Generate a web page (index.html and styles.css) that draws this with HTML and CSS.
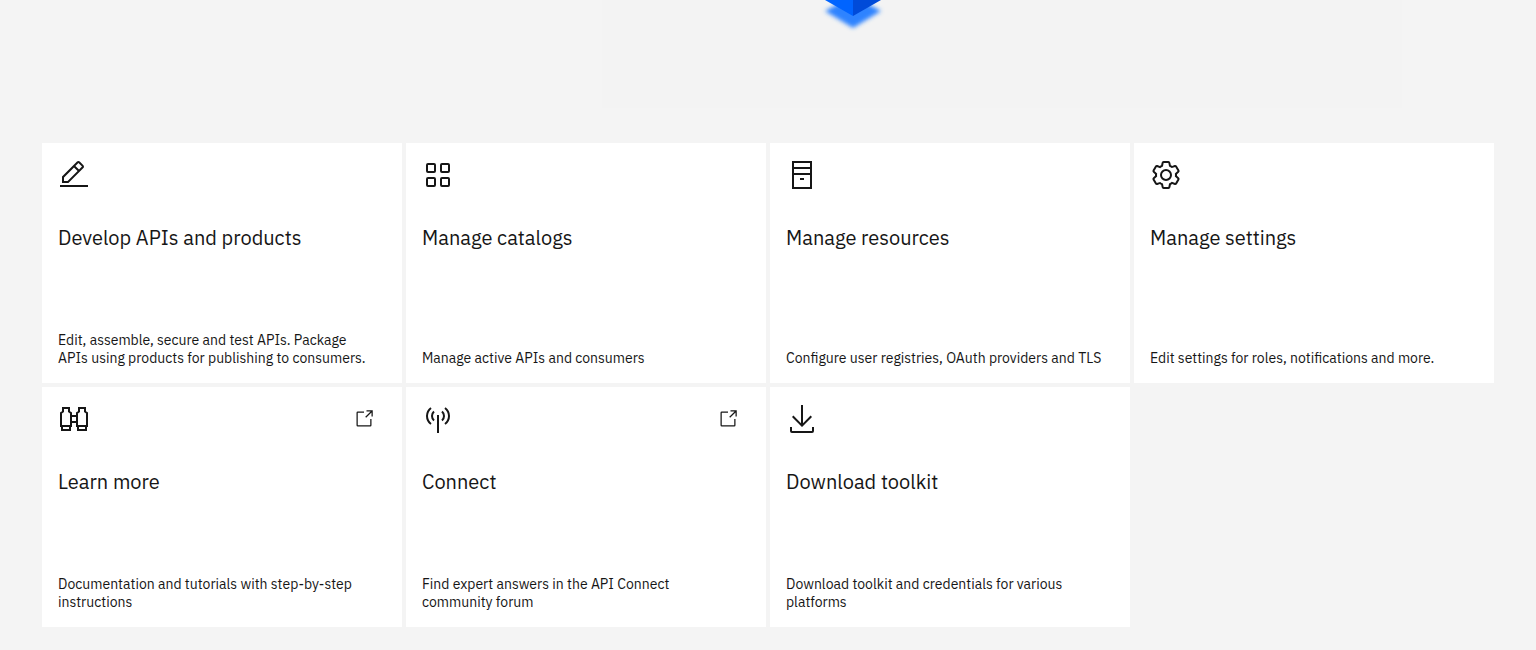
FILE: index.html
```html
<!DOCTYPE html>
<html lang="en">
<head>
<meta charset="utf-8">
<meta name="viewport" content="width=device-width, initial-scale=1">
<title>API Manager</title>
<link rel="stylesheet" href="styles.css">
</head>
<body>
<header class="hero">
  <svg class="hero-art" viewBox="0 0 800 108" aria-hidden="true">
    <defs><filter id="glow" x="-20%" y="-40%" width="140%" height="180%"><feGaussianBlur stdDeviation="2.3"/></filter></defs>
    <path d="M223 11 251 -4 279 11 251 28z" fill="#2e83ff" filter="url(#glow)"/>
    <path d="M223 0h28v16z" fill="#0064ff"/>
    <path d="M251 0h28L251 16z" fill="#004bd9"/>
  </svg>
</header>
<main class="tiles">
  <a class="tile" href="#develop">
    <span class="tile-top"><svg class="icon" viewBox="0 0 32 32" aria-hidden="true"><path d="M2 26h28v2H2zM25.4 9c.8-.8.8-2 0-2.8l-3.6-3.6c-.8-.8-2-.8-2.8 0l-15 15V24h6.4l15-15zm-5-5L24 7.6l-3 3L17.4 7l3-3zM6 22v-3.6l10-10 3.6 3.6-10 10H6z"/></svg></span>
    <h2 class="tile-title">Develop APIs and products</h2>
    <p class="tile-text">Edit, assemble, secure and test APIs. Package APIs using products for publishing to consumers.</p>
  </a>
  <a class="tile" href="#catalogs">
    <span class="tile-top"><svg class="icon icon-line" viewBox="0 0 32 32" aria-hidden="true"><rect x="5" y="5" width="8" height="8" rx="1"/><rect x="19" y="5" width="8" height="8" rx="1"/><rect x="5" y="19" width="8" height="8" rx="1"/><rect x="19" y="19" width="8" height="8" rx="1"/></svg></span>
    <h2 class="tile-title">Manage catalogs</h2>
    <p class="tile-text">Manage active APIs and consumers</p>
  </a>
  <a class="tile" href="#resources">
    <span class="tile-top"><svg class="icon icon-line" viewBox="0 0 32 32" aria-hidden="true"><path d="M7 3h18v26H7zM7 9h18M7 15h18M14 20h4"/></svg></span>
    <h2 class="tile-title">Manage resources</h2>
    <p class="tile-text">Configure user registries, OAuth providers and TLS</p>
  </a>
  <a class="tile" href="#settings">
    <span class="tile-top"><svg class="icon" viewBox="0 0 32 32" aria-hidden="true"><path d="M27 16.76V15.23l1.92-1.68A2 2 0 0029.3 11L26.94 7a2 2 0 00-1.73-1 2 2 0 00-.64.1l-2.43.82a11.35 11.35 0 00-1.31-.75l-.51-2.52a2 2 0 00-2-1.61H13.64a2 2 0 00-2 1.61l-.51 2.52a11.48 11.48 0 00-1.32.75L7.43 6.06A2 2 0 006.79 6 2 2 0 005.06 7L2.7 11a2 2 0 00.41 2.51L5 15.24v1.53L3.11 18.45A2 2 0 002.7 21l2.36 4a2 2 0 001.73 1 2 2 0 00.64-.1l2.43-.82a11.35 11.35 0 001.31.75l.51 2.52a2 2 0 002 1.61h4.72a2 2 0 002-1.61l.51-2.52a11.48 11.48 0 001.32-.75l2.42.82a2 2 0 00.64.1 2 2 0 001.73-1L29.3 21a2 2 0 00-.41-2.51zM25.21 24l-3.43-1.16a8.86 8.86 0 01-2.71 1.57L18.36 28H13.64l-.71-3.55a9.36 9.36 0 01-2.7-1.57L6.79 24 4.43 20l2.72-2.4a8.9 8.9 0 010-3.13L4.43 12 6.79 8l3.43 1.16a8.86 8.86 0 012.71-1.57L13.64 4h4.72l.71 3.55a9.36 9.36 0 012.7 1.57L25.21 8 27.57 12l-2.72 2.4a8.9 8.9 0 010 3.13L27.57 20zM16 22a6 6 0 116-6 5.94 5.94 0 01-6 6zm0-10a3.91 3.91 0 00-4 4 3.91 3.91 0 004 4 3.91 3.91 0 004-4 3.91 3.91 0 00-4-4z"/></svg></span>
    <h2 class="tile-title">Manage settings</h2>
    <p class="tile-text">Edit settings for roles, notifications and more.</p>
  </a>
  <a class="tile" href="#learn">
    <span class="tile-top">
      <svg class="icon icon-line" viewBox="0 0 32 32" aria-hidden="true"><path d="M5 5h6v3.500l2 1.500V23H3V10l2-1.500zM21 5h6v3.500l2 1.500V23H19V10l2-1.500zM4 23v4h8v-4M20 23v4h8v-4M13 13h6M13 19h6"/></svg>
      <svg class="launch" viewBox="0 0 32 32" aria-hidden="true"><path d="M26 28H6a2 2 0 01-2-2V6a2 2 0 012-2h10v2H6v20h20V16h2v10a2 2 0 01-2 2zM20 2v2h6.590L18 12.590 19.410 14 28 5.410V12h2V2z"/></svg>
    </span>
    <h2 class="tile-title">Learn more</h2>
    <p class="tile-text">Documentation and tutorials with step-by-step instructions</p>
  </a>
  <a class="tile" href="#connect">
    <span class="tile-top">
      <svg class="icon" viewBox="0 0 32 32" aria-hidden="true"><path d="M15 12h2v18h-2zM11.330 18.220a7 7 0 010-10.440l1.340 1.490a5 5 0 000 7.460zM20.670 18.220l-1.340-1.490a5 5 0 000-7.460l1.340-1.490a7 7 0 010 10.440zM8.400 21.800a11 11 0 010-17.600l1.200 1.600a9 9 0 000 14.400zM23.600 21.800l-1.200-1.600a9 9 0 000-14.400l1.200-1.600a11 11 0 010 17.600z"/></svg>
      <svg class="launch" viewBox="0 0 32 32" aria-hidden="true"><path d="M26 28H6a2 2 0 01-2-2V6a2 2 0 012-2h10v2H6v20h20V16h2v10a2 2 0 01-2 2zM20 2v2h6.590L18 12.590 19.410 14 28 5.410V12h2V2z"/></svg>
    </span>
    <h2 class="tile-title">Connect</h2>
    <p class="tile-text">Find expert answers in the API Connect community forum</p>
  </a>
  <a class="tile" href="#toolkit">
    <span class="tile-top"><svg class="icon" viewBox="0 0 32 32" aria-hidden="true"><path d="M26 24v4H6v-4H4v4a2 2 0 002 2h20a2 2 0 002-2v-4zM26 14l-1.410-1.410L17 20.170V2h-2v18.170l-7.590-7.580L6 14l10 10z"/></svg></span>
    <h2 class="tile-title">Download toolkit</h2>
    <p class="tile-text">Download toolkit and credentials for various platforms</p>
  </a>
</main>
</body>
</html>
```
FILE: styles.css
```css
* { box-sizing: border-box; }
body {
  margin: 0;
  background: #f4f4f4;
  color: #161616;
  font-family: "IBM Plex Sans", Roboto, "Liberation Sans", sans-serif;
}
.hero {
  display: flex;
  justify-content: flex-end;
  padding-right: 134px;
}
.hero-art {
  display: block;
  width: 800px;
  max-width: 100%;
  background: #f3f3f3;
}
.tiles {
  display: grid;
  grid-template-columns: repeat(4, 1fr);
  grid-auto-rows: minmax(240px, auto);
  gap: 4px;
  padding: 35px 42px 23px;
}
.tile {
  display: flex;
  flex-direction: column;
  padding: 16px;
  background: #fff;
  color: inherit;
  text-decoration: none;
}
.tile-top {
  display: flex;
  justify-content: space-between;
  padding-right: 12px;
}
.icon { width: 32px; height: 32px; fill: #161616; }
.icon-line { fill: none; stroke: #161616; stroke-width: 2; }
.launch { width: 20px; height: 20px; margin-top: 6px; fill: #161616; }
.tile-title {
  margin: 34px 0 0;
  font-size: 20px;
  font-weight: 400;
  line-height: 26px;
}
.tile-text {
  margin: auto 0 0;
  padding-right: 10px;
  font-size: 14px;
  line-height: 18px;
}
```
